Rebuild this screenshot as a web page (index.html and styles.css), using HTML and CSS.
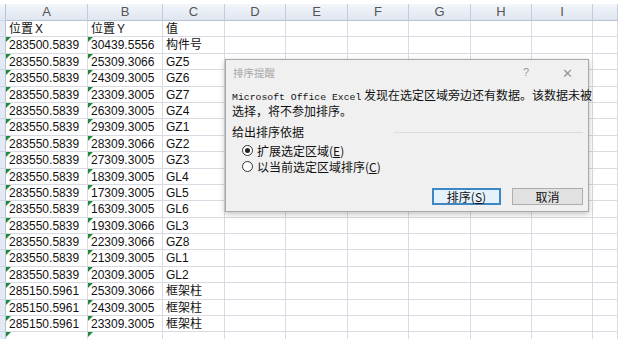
FILE: index.html
```html
<!DOCTYPE html>
<html lang="zh-CN">
<head>
    <meta charset="UTF-8">
    <meta name="viewport" content="width=device-width, initial-scale=1.0">
    <title>排序提醒</title>
    <link rel="stylesheet" href="styles.css">
</head>
<body>

<div class="sheet" id="sheet"></div>

<div class="dialog">
    <div class="dialog-title">
        <span class="title-text">排序提醒</span>
        <span class="title-help">?</span>
        <span class="title-close">&#x2715;</span>
    </div>
    <div class="dialog-msg">
        <span class="latin">Microsoft Office Excel</span> 发现在选定区域旁边还有数据。该数据未被<br>选择，将不参加排序。
    </div>
    <div class="group-label">给出排序依据</div>
    <label class="radio-row">
        <span class="radio checked"></span>扩展选定区域(<u>E</u>)
    </label>
    <label class="radio-row">
        <span class="radio"></span>以当前选定区域排序(<u>C</u>)
    </label>
    <div class="dialog-buttons">
        <button class="btn btn-primary">排序(<u>S</u>)</button>
        <button class="btn">取消</button>
    </div>
</div>

<script>
document.addEventListener('DOMContentLoaded', function() {
    const sheet = document.getElementById('sheet');
    const letters = ['A', 'B', 'C', 'D', 'E', 'F', 'G', 'H', 'I', ''];

    const rows = [
        ['位置Ｘ', '位置Ｙ', '值', false],
        ['283500.5839', '30439.5556', '构件号', true],
        ['283550.5839', '25309.3066', 'GZ5', true],
        ['283550.5839', '24309.3005', 'GZ6', true],
        ['283550.5839', '23309.3005', 'GZ7', true],
        ['283550.5839', '26309.3005', 'GZ4', true],
        ['283550.5839', '29309.3005', 'GZ1', true],
        ['283550.5839', '28309.3066', 'GZ2', true],
        ['283550.5839', '27309.3005', 'GZ3', true],
        ['283550.5839', '18309.3005', 'GL4', true],
        ['283550.5839', '17309.3005', 'GL5', true],
        ['283550.5839', '16309.3005', 'GL6', true],
        ['283550.5839', '19309.3066', 'GL3', true],
        ['283550.5839', '22309.3066', 'GZ8', true],
        ['283550.5839', '21309.3005', 'GL1', true],
        ['283550.5839', '20309.3005', 'GL2', true],
        ['285150.5961', '25309.3066', '框架柱', true],
        ['285150.5961', '24309.3005', '框架柱', true],
        ['285150.5961', '23309.3005', '框架柱', true],
        ['', '', '', true]
    ];

    let html = '<div class="cell row-head head"></div>';
    letters.forEach(l => {
        html += `<div class="cell col-head">${l}</div>`;
    });

    rows.forEach(r => {
        html += '<div class="cell row-head"></div>';
        for (let i = 0; i < 10; i++) {
            const flag = r[3] && i < 2 ? ' flag' : '';
            const text = i < 3 ? r[i] : '';
            html += `<div class="cell${flag}">${text}</div>`;
        }
    });

    sheet.innerHTML = html;
});
</script>

</body>
</html>
```

FILE: styles.css
```css
body {
    margin: 0;
    padding: 0;
    background-color: #ffffff;
    font-family: 'Liberation Sans', 'Noto Sans CJK SC', sans-serif;
    overflow: hidden;
    width: 623px;
    height: 339px;
    position: relative;
}

.sheet {
    display: grid;
    grid-template-columns: 6px 82px 75px 62px 61px 62px 61px 62px 61px 61px 25px;
    grid-template-rows: 17px;
    grid-auto-rows: 16.4px;
    margin-top: 4px;
    width: 618px;
}

.cell {
    position: relative;
    box-sizing: border-box;
    border-right: 1px solid #d8dbe1;
    border-bottom: 1px solid #d8dbe1;
    font-size: 12px;
    line-height: 16px;
    padding-left: 3px;
    color: #111;
    white-space: nowrap;
    overflow: hidden;
}

.col-head {
    background: linear-gradient(#f3f6fb, #dfe6f0);
    border-right: 1px solid #c3cddb;
    border-bottom: 1px solid #b7c3d4;
    text-align: center;
    padding-left: 0;
    color: #555;
    font-size: 13px;
}

.row-head {
    background-color: #e3eaf4;
    border-right: 1px solid #b7c3d4;
    border-bottom: 1px solid #cdd6e3;
    padding-left: 0;
}

.row-head.head {
    background: linear-gradient(#f3f6fb, #dfe6f0);
}

.flag::before {
    content: '';
    position: absolute;
    top: 0;
    left: 0;
    border-top: 5px solid #1c8a3a;
    border-right: 5px solid transparent;
}

.dialog {
    position: absolute;
    left: 225px;
    top: 59px;
    width: 364px;
    height: 153px;
    box-sizing: border-box;
    border: 1px solid #a9a9a9;
    background-color: #f0f0f0;
    box-shadow: 0 2px 6px rgba(0, 0, 0, 0.25);
    display: flex;
    flex-direction: column;
    padding: 0 5px 6px 6px;
    font-family: 'Noto Sans CJK SC', 'Liberation Sans', sans-serif;
    font-size: 12px;
    color: #111;
}

.dialog-title {
    display: flex;
    align-items: center;
    height: 24px;
    color: #a8a8a8;
}

.title-text {
    flex: 1;
    font-size: 10.5px;
    padding-left: 1px;
}

.title-help {
    font-family: 'Liberation Sans', sans-serif;
    font-size: 11px;
    color: #999;
    margin-right: 33px;
}

.title-close {
    font-size: 13px;
    color: #999;
    margin-right: 10px;
}

.dialog-msg {
    margin-top: 4px;
    line-height: 13px;
    white-space: nowrap;
}

.latin {
    font-family: 'Liberation Mono', monospace;
    font-size: 9.8px;
}

.group-label {
    display: flex;
    align-items: center;
    margin-top: 8px;
    line-height: 14px;
}

.group-label::after {
    content: '';
    flex: 1;
    border-top: 1px solid #dcdcdc;
    margin-left: 90px;
}

.radio-row {
    display: flex;
    align-items: center;
    height: 16px;
    padding-left: 10px;
}

.radio-row:first-of-type {
    margin-top: 3px;
}

.radio {
    width: 11px;
    height: 11px;
    box-sizing: border-box;
    border: 1px solid #333;
    border-radius: 50%;
    background-color: #fff;
    margin-right: 4px;
    display: flex;
    align-items: center;
    justify-content: center;
}

.radio.checked::after {
    content: '';
    width: 5px;
    height: 5px;
    border-radius: 50%;
    background-color: #222;
}

.dialog-buttons {
    margin-top: auto;
    display: flex;
    justify-content: flex-end;
    gap: 11px;
}

.btn {
    height: 17px;
    width: 71px;
    padding: 0;
    border: 1px solid #adadad;
    background-color: #e1e1e1;
    font-family: 'Noto Sans CJK SC', 'Liberation Sans', sans-serif;
    font-size: 12px;
    line-height: 15px;
    color: #111;
}

.btn-primary {
    width: 69px;
    border: 2px solid #3f86c4;
    background-color: #e5f1fb;
    line-height: 13px;
}
```
